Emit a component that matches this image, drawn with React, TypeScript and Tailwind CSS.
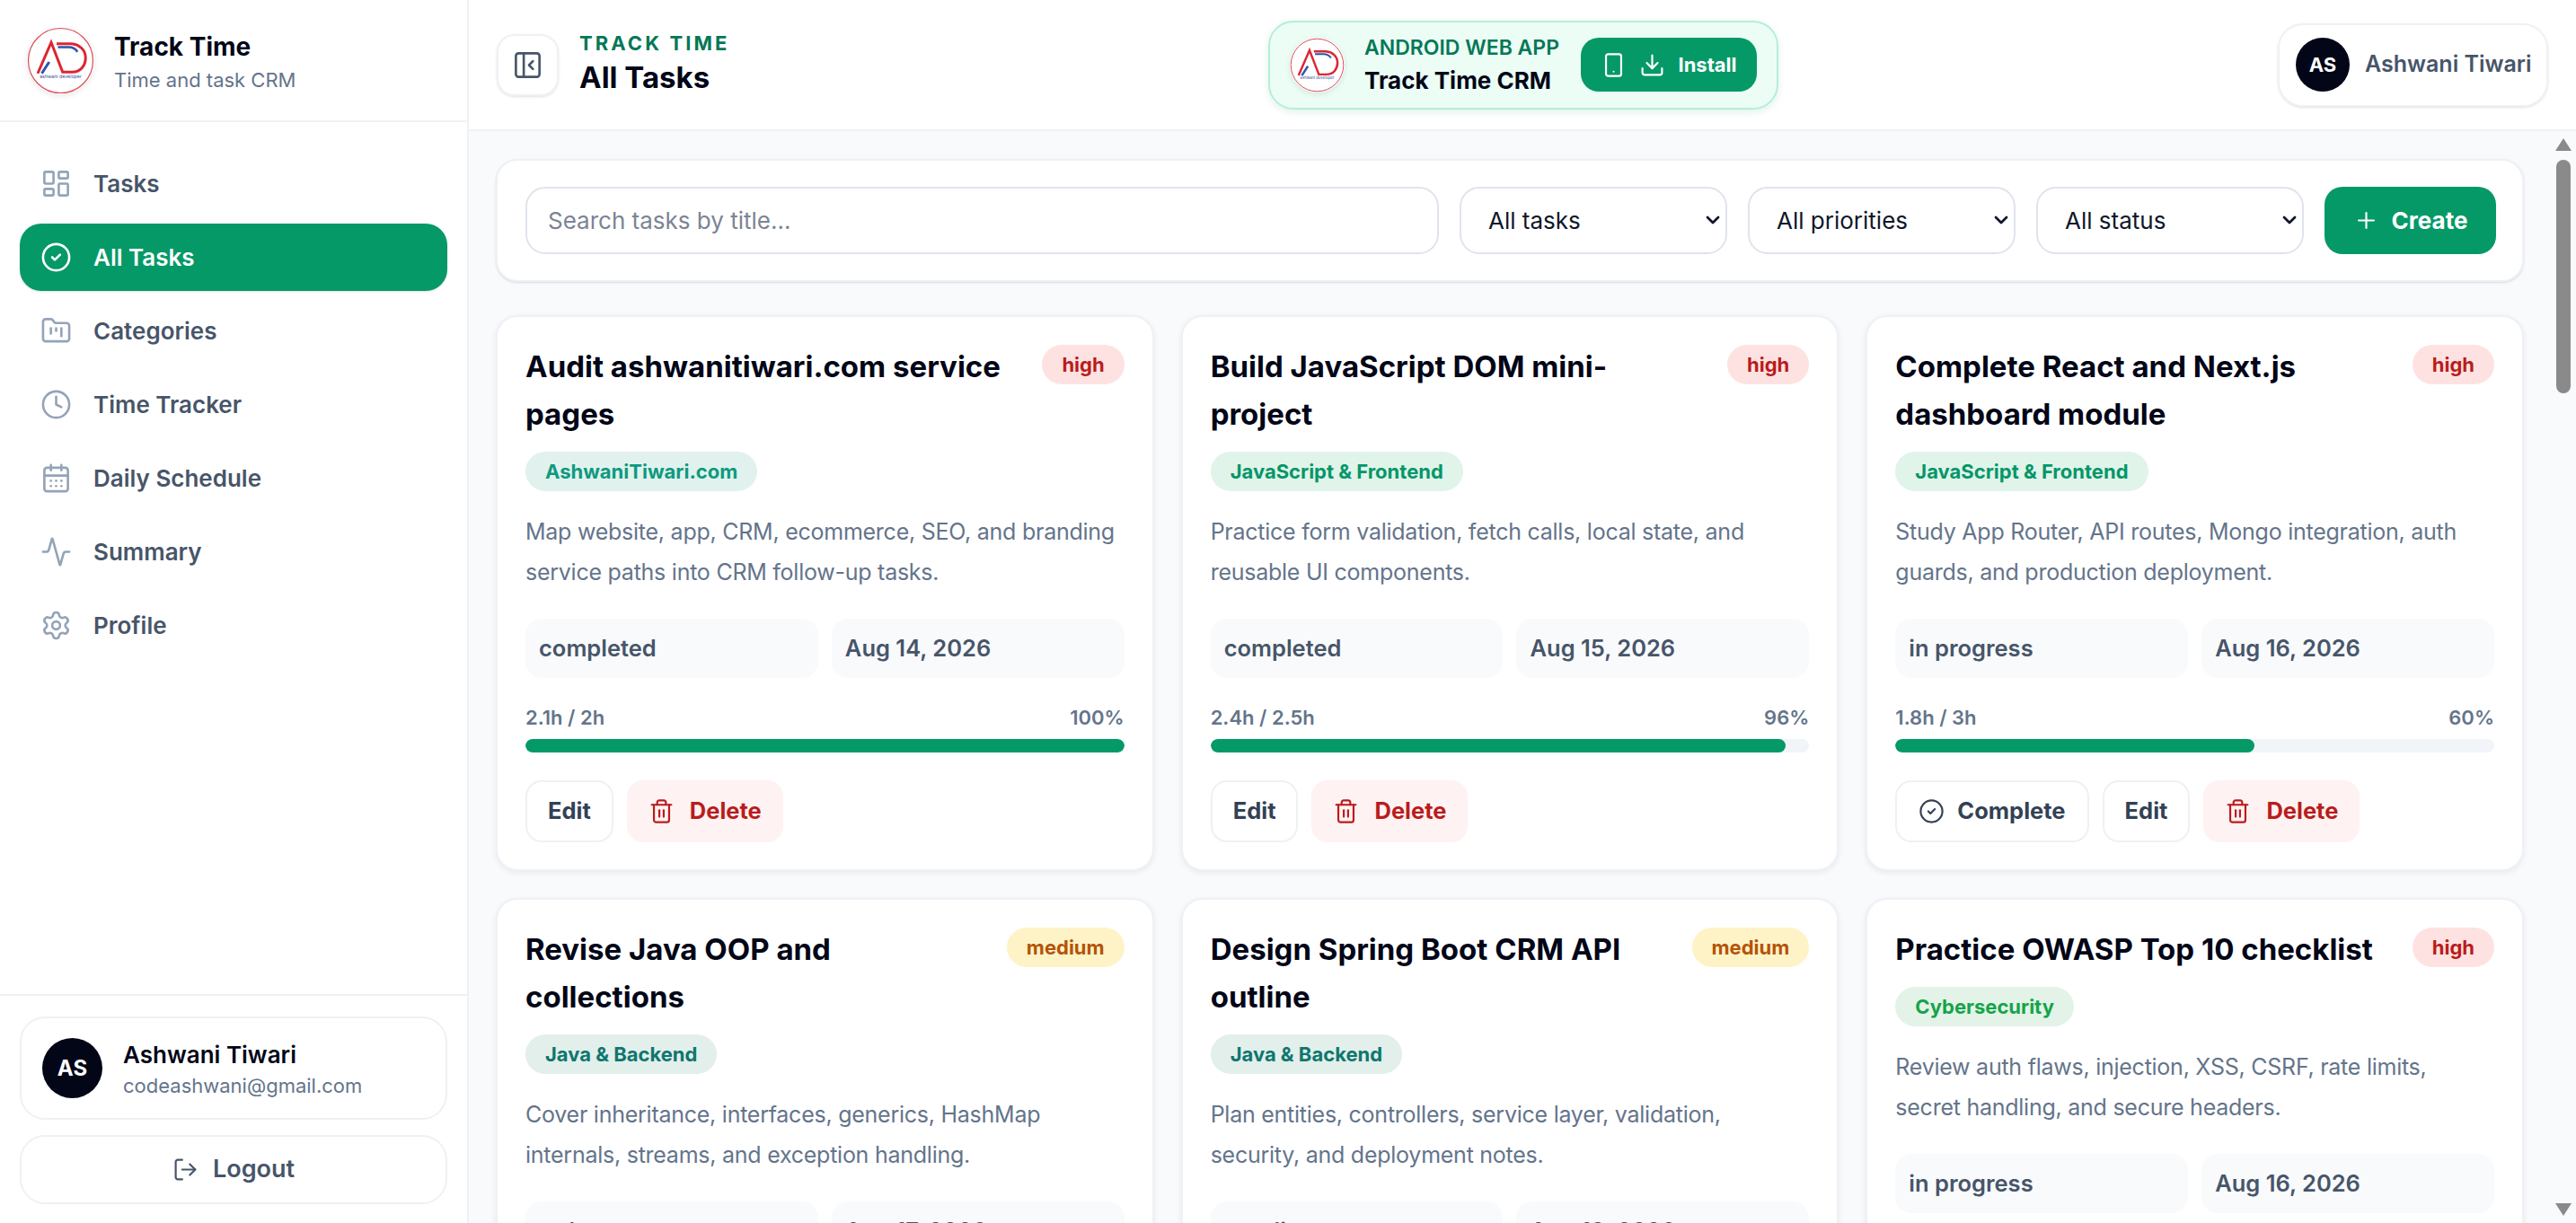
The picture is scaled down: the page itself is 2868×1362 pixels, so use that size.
import {
  Activity,
  CalendarDays,
  ChevronDown,
  CircleCheck,
  Clock,
  Download,
  FolderKanban,
  LayoutDashboard,
  LogOut,
  PanelLeftClose,
  Plus,
  Settings,
  Smartphone,
  Trash2,
} from "lucide-react";

const navItems = [
  { label: "Tasks", icon: LayoutDashboard },
  { label: "All Tasks", icon: CircleCheck, active: true },
  { label: "Categories", icon: FolderKanban },
  { label: "Time Tracker", icon: Clock },
  { label: "Daily Schedule", icon: CalendarDays },
  { label: "Summary", icon: Activity },
  { label: "Profile", icon: Settings },
];

const tasks = [
  {
    title: "Audit ashwanitiwari.com service pages",
    priority: "high",
    category: "AshwaniTiwari.com",
    pill: "bg-[#e1f2ee] text-[#0d9a7f]",
    description: "Map website, app, CRM, ecommerce, SEO, and branding service paths into CRM follow-up tasks.",
    status: "completed",
    date: "Aug 14, 2026",
    hours: "2.1h / 2h",
    percent: 100,
  },
  {
    title: "Build JavaScript DOM mini-project",
    priority: "high",
    category: "JavaScript & Frontend",
    pill: "bg-[#e0f4ea] text-[#059669]",
    description: "Practice form validation, fetch calls, local state, and reusable UI components.",
    status: "completed",
    date: "Aug 15, 2026",
    hours: "2.4h / 2.5h",
    percent: 96,
  },
  {
    title: "Complete React and Next.js dashboard module",
    priority: "high",
    category: "JavaScript & Frontend",
    pill: "bg-[#e0f4ea] text-[#059669]",
    description: "Study App Router, API routes, Mongo integration, auth guards, and production deployment.",
    status: "in progress",
    date: "Aug 16, 2026",
    hours: "1.8h / 3h",
    percent: 60,
  },
  {
    title: "Revise Java OOP and collections",
    priority: "medium",
    category: "Java & Backend",
    pill: "bg-[#e2efeb] text-[#0f766e]",
    description: "Cover inheritance, interfaces, generics, HashMap internals, streams, and exception handling.",
    status: "todo",
    date: "Aug 17, 2026",
    hours: "0h / 2h",
    percent: 0,
  },
  {
    title: "Design Spring Boot CRM API outline",
    priority: "medium",
    category: "Java & Backend",
    pill: "bg-[#e2efeb] text-[#0f766e]",
    description: "Plan entities, controllers, service layer, validation, security, and deployment notes.",
    status: "pending",
    date: "Aug 18, 2026",
    hours: "0h / 2h",
    percent: 0,
  },
  {
    title: "Practice OWASP Top 10 checklist",
    priority: "high",
    category: "Cybersecurity",
    pill: "bg-[#e3f3e8] text-[#16a34a]",
    description: "Review auth flaws, injection, XSS, CSRF, rate limits, secret handling, and secure headers.",
    status: "in progress",
    date: "Aug 16, 2026",
    hours: "1h / 2h",
    percent: 50,
  },
];

function Logo({ className }: { className: string }) {
  return (
    <div className={`shrink-0 rounded-full bg-white shadow-[0_2px_6px_rgba(15,23,42,0.10)] ${className}`}>
      <svg viewBox="0 0 100 100" className="h-full w-full" fill="none">
        <circle cx="50" cy="50" r="48" stroke="#dc4a55" strokeWidth="1.6" />
        <path d="M16 69 36 23 53 67H67C80 67 87 57 87 46 87 34 78 26 66 25H44" stroke="#dc2632" strokeWidth="4" />
        <path d="M46 30H62C68 30 72 32 75 37" stroke="#2f55a8" strokeWidth="3.5" />
        <path d="M22 69 33 52" stroke="#2f55a8" strokeWidth="4" />
        <text x="50" y="76" textAnchor="middle" fontSize="7" fill="#3b4fa0" fontFamily="Inter, sans-serif">
          ashwani developer
        </text>
      </svg>
    </div>
  );
}

function Avatar({ className }: { className: string }) {
  return (
    <div className={`flex shrink-0 items-center justify-center rounded-full bg-[#020617] font-bold text-white ${className}`}>
      AS
    </div>
  );
}

function Sidebar() {
  return (
    <aside className="flex h-full w-[522px] shrink-0 flex-col border-r-2 border-[#eef1f5] bg-white">
      <div className="flex h-[136px] shrink-0 items-center gap-[22px] border-b-2 border-[#eef1f5] pl-[30px]">
        <Logo className="h-[75px] w-[75px]" />
        <div className="pt-[3px]">
          <p className="text-[28px] leading-[40px] font-bold text-[#020617]">Track Time</p>
          <p className="mt-[1px] text-[22px] leading-[32px] text-[#64748b]">Time and task CRM</p>
        </div>
      </div>

      <nav className="flex flex-1 flex-col gap-[7px] px-[22px] pt-[31px]">
        {navItems.map((item) => {
          const Icon = item.icon;
          return (
            <div
              key={item.label}
              className={`flex h-[75px] items-center gap-[24px] rounded-[24px] pl-[23px] text-[26px] font-semibold ${
                item.active ? "bg-[#059967] text-white shadow-sm" : "text-[#475569]"
              }`}
            >
              <Icon className={`h-[35px] w-[35px] ${item.active ? "text-white" : "text-[#94a3b8]"}`} strokeWidth={1.8} />
              {item.label}
            </div>
          );
        })}
      </nav>

      <div className="flex flex-col gap-[17px] border-t-2 border-[#eef1f5] px-[22px] pt-[23px] pb-[21px]">
        <div className="flex h-[115px] items-center gap-[23px] rounded-[28px] border-2 border-[#eef1f5] pl-[23px]">
          <Avatar className="h-[67px] w-[67px] text-[24px]" />
          <div className="pt-[3px]">
            <p className="text-[26px] leading-[36px] font-semibold text-[#020617]">Ashwani Tiwari</p>
            <p className="text-[22px] leading-[32px] text-[#64748b]">codeashwani@gmail.com</p>
          </div>
        </div>
        <button className="flex h-[77px] items-center justify-center gap-[16px] rounded-[28px] border-2 border-[#eef1f5] text-[27px] font-semibold text-[#475569]">
          <LogOut className="h-[29px] w-[29px]" strokeWidth={1.8} />
          Logout
        </button>
      </div>
    </aside>
  );
}

function Header() {
  return (
    <header className="flex h-[146px] shrink-0 items-center border-b-2 border-[#eef1f5] bg-white pr-[31px] pl-[31px]">
      <div className="flex w-[859px] shrink-0 items-center gap-[23px]">
        <button className="flex h-[69px] w-[69px] items-center justify-center rounded-[20px] border-2 border-[#eef1f5] shadow-sm">
          <PanelLeftClose className="h-[35px] w-[35px] text-[#475569]" strokeWidth={1.8} />
        </button>
        <div className="-mt-[4px]">
          <p className="text-[22px] leading-[30px] font-bold tracking-[0.14em] text-[#047857]">TRACK TIME</p>
          <p className="mt-[1px] text-[33px] leading-[44px] font-bold text-[#020617]">All Tasks</p>
        </div>
      </div>

      <div className="flex h-[99px] w-[568px] items-center gap-[22px] rounded-[28px] border-2 border-[#b5eeda] bg-[#ecfdf5] pl-[22px] shadow-[0_3px_8px_rgba(5,150,105,0.12)]">
        <Logo className="h-[61px] w-[61px]" />
        <div className="w-[219px]">
          <p className="text-[23px] leading-[30px] font-semibold whitespace-nowrap text-[#047857]">ANDROID WEB APP</p>
          <p className="mt-[5px] text-[26px] leading-[34px] font-bold whitespace-nowrap text-[#020617]">Track Time CRM</p>
        </div>
        <button className="flex h-[60px] w-[196px] items-center justify-center gap-[14px] rounded-[20px] bg-[#059967] text-[22px] font-bold text-white">
          <Smartphone className="h-[29px] w-[29px]" strokeWidth={1.8} />
          <Download className="h-[29px] w-[29px]" strokeWidth={1.8} />
          Install
        </button>
      </div>

      <div className="ml-auto flex h-[93px] w-[301px] items-center gap-[17px] rounded-[28px] border-2 border-[#eef1f5] pl-[18px] shadow-sm">
        <Avatar className="h-[60px] w-[60px] text-[22px]" />
        <span className="text-[25px] font-semibold whitespace-nowrap text-[#475569]">Ashwani Tiwari</span>
      </div>
    </header>
  );
}

function Filter({ options }: { options: string[] }) {
  return (
    <div className="relative w-[298px] shrink-0">
      <select className="h-[75px] w-full appearance-none rounded-[22px] border-2 border-[#dfe4ec] bg-white pl-[30px] text-[26px] text-[#0f172a]">
        {options.map((option) => (
          <option key={option}>{option}</option>
        ))}
      </select>
      <ChevronDown className="pointer-events-none absolute top-[25px] right-[4px] h-[24px] w-[24px] text-[#0f172a]" strokeWidth={2.8} />
    </div>
  );
}

function Toolbar() {
  return (
    <div className="flex items-center gap-[23px] rounded-[24px] border-2 border-[#eef1f5] bg-white py-[29px] pr-[29px] pl-[31px] shadow-sm">
      <input
        placeholder="Search tasks by title..."
        className="h-[75px] min-w-0 flex-1 rounded-[22px] border-2 border-[#dfe4ec] px-[23px] text-[26px] placeholder:text-[#7b8494]"
      />
      <Filter options={["All tasks", "My tasks"]} />
      <Filter options={["All priorities", "High", "Medium"]} />
      <Filter options={["All status", "Completed"]} />
      <button className="flex h-[75px] w-[191px] shrink-0 items-center justify-center gap-[14px] rounded-[20px] bg-[#059967] text-[26px] font-bold text-white">
        <Plus className="h-[29px] w-[29px]" strokeWidth={1.8} />
        Create
      </button>
    </div>
  );
}

function TaskCard({ task }: { task: (typeof tasks)[number] }) {
  const done = task.status === "completed";
  return (
    <article className="flex flex-col rounded-[24px] border-2 border-[#eef1f5] bg-white px-[31px] pt-[29px] pb-[30px] shadow-[0_2px_6px_rgba(15,23,42,0.07)]">
      <div className="flex items-start justify-between gap-[22px]">
        <h3 className="text-[33px] leading-[53px] font-bold text-[#020617]">{task.title}</h3>
        <span
          className={`mt-[2px] shrink-0 rounded-full px-[22px] text-[22px] leading-[44px] font-bold ${
            task.priority === "high" ? "bg-[#fee2e2] text-[#b91c1c]" : "bg-[#fef3c7] text-[#b45309]"
          }`}
        >
          {task.priority}
        </span>
      </div>
      <span className={`mt-[15px] self-start rounded-full px-[22px] text-[22px] leading-[44px] font-bold ${task.pill}`}>
        {task.category}
      </span>
      <p className="mt-[23px] text-[25px] leading-[45px] tracking-[-0.01em] text-[#64748b]">{task.description}</p>
      <div className="mt-[29px] grid grid-cols-2 gap-[15px]">
        <div className="flex h-[66px] items-center rounded-[18px] bg-[#f8fafc] px-[15px] text-[25.5px] font-semibold text-[#475569]">
          {task.status}
        </div>
        <div className="flex h-[66px] items-center rounded-[18px] bg-[#f8fafc] px-[15px] text-[25.5px] font-semibold text-[#475569]">
          {task.date}
        </div>
      </div>
      <div className="mt-[28px] flex justify-between text-[22px] leading-[33px] font-semibold text-[#64748b]">
        <span>{task.hours}</span>
        <span>{task.percent}%</span>
      </div>
      <div className="mt-[7px] h-[15px] overflow-hidden rounded-full bg-[#f1f5f9]">
        <div className="h-full rounded-full bg-[#059967]" style={{ width: `${task.percent}%` }} />
      </div>
      <div className="mt-[31px] flex gap-[15px] text-[25.5px] font-bold">
        {!done && (
          <button className="flex h-[69px] items-center gap-[14px] rounded-[18px] border-2 border-[#eef1f5] px-[24px] text-[#334155]">
            <CircleCheck className="h-[29px] w-[29px]" strokeWidth={1.8} />
            Complete
          </button>
        )}
        <button className="flex h-[69px] items-center rounded-[18px] border-2 border-[#eef1f5] px-[23px] text-[#334155]">
          Edit
        </button>
        <button className="flex h-[69px] items-center gap-[17px] rounded-[18px] bg-[#fef2f2] px-[24px] text-[#b91c1c]">
          <Trash2 className="h-[29px] w-[29px]" strokeWidth={1.8} />
          Delete
        </button>
      </div>
    </article>
  );
}

function Scrollbar() {
  return (
    <div className="flex w-[29px] shrink-0 flex-col items-center pt-[8px] pb-[8px]">
      <div className="h-0 w-0 border-x-[9px] border-b-[14px] border-x-transparent border-b-[#8a8a8a]" />
      <div className="mt-[10px] h-[260px] w-[16px] rounded-full bg-[#8a8a8a]" />
      <div className="flex-1" />
      <div className="h-0 w-0 border-x-[9px] border-t-[14px] border-x-transparent border-t-[#8a8a8a]" />
    </div>
  );
}

export default function App() {
  return (
    <div className="flex h-screen overflow-hidden bg-white font-['Inter',sans-serif]">
      <Sidebar />
      <main className="flex min-w-0 flex-1 flex-col">
        <Header />
        <div className="flex min-h-0 flex-1 bg-[#f8fafc]">
          <div className="min-w-0 flex-1 overflow-hidden pt-[31px] pr-[29px] pl-[30px]">
            <Toolbar />
            <div className="mt-[37px] grid grid-cols-3 gap-[30px]">
              {tasks.map((task) => (
                <TaskCard key={task.title} task={task} />
              ))}
            </div>
          </div>
          <Scrollbar />
        </div>
      </main>
    </div>
  );
}
